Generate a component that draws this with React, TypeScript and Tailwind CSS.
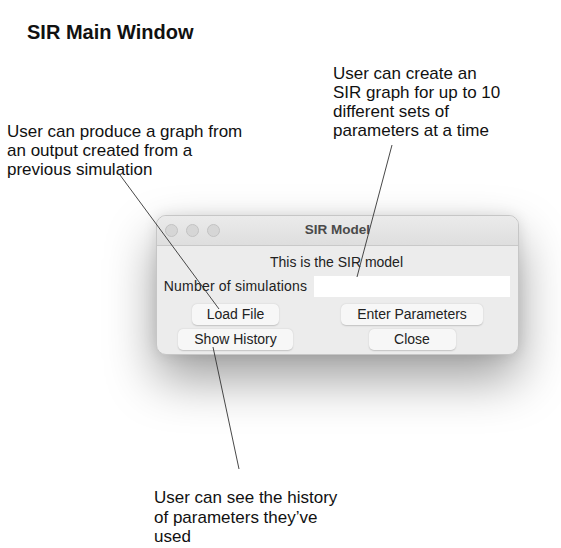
import React from "react";

function Btn({ w, children }: { w: string; children: React.ReactNode }) {
  return (
    <div
      className={`${w} h-[21px] rounded-[5px] bg-[#f7f7f7] shadow-[0_0.5px_1.5px_rgba(0,0,0,0.18)] text-center text-[14px] leading-[21px] text-[#222]`}
    >
      {children}
    </div>
  );
}

export default function App() {
  return (
    <div className="relative w-[561px] h-[548px] overflow-hidden bg-white text-[#111] font-['Liberation_Sans',Arial,sans-serif]">
      <h1 className="pt-[22px] pl-[27px] text-[20px] leading-[20px] font-bold">SIR Main Window</h1>

      <div className="flex items-start">
        <p className="mt-[80px] ml-[7px] w-[260px] text-[17px] leading-[19px]">
          User can produce a graph from
          <br />
          an output created from a
          <br />
          previous simulation
        </p>
        <p className="mt-[22px] ml-[66px] text-[17px] leading-[19px]">
          User can create an
          <br />
          SIR graph for up to 10
          <br />
          different sets of
          <br />
          parameters at a time
        </p>
      </div>

      <div className="mt-[36px] ml-[156px] w-[363px] h-[140px] flex flex-col overflow-hidden rounded-[10px] border border-[#c6c6c6] bg-[#ececec] shadow-[0_24px_50px_rgba(0,0,0,0.38),0_0_14px_rgba(0,0,0,0.1)]">
        <div className="relative h-[30px] shrink-0 flex items-center border-b border-[#c9c9c9] bg-gradient-to-b from-[#ebebeb] to-[#dedede]">
          <div className="flex gap-[8px] pl-[8px]">
            <span className="w-[13px] h-[13px] rounded-full bg-[#d6d6d6] border border-[#c2c2c2]" />
            <span className="w-[13px] h-[13px] rounded-full bg-[#d6d6d6] border border-[#c2c2c2]" />
            <span className="w-[13px] h-[13px] rounded-full bg-[#d6d6d6] border border-[#c2c2c2]" />
          </div>
          <span className="absolute inset-x-0 text-center text-[13.5px] font-bold text-[#4a4a4a]">SIR Model</span>
        </div>

        <div className="pt-[7px] pl-[6px] pr-[8px] text-[#222]">
          <div className="text-center text-[14px] leading-[18px]">This is the SIR model</div>
          <div className="mt-[5px] grid grid-cols-[145px_196px] gap-x-[6px]">
            <div className="h-[21px] flex items-center justify-center text-[14px] tracking-[0.2px] whitespace-nowrap">Number of simulations</div>
            <div className="h-[21px] bg-white" />
            <div className="mt-[7px] flex justify-center">
              <Btn w="w-[87px]">Load File</Btn>
            </div>
            <div className="mt-[7px] flex justify-center">
              <Btn w="w-[142px]">Enter Parameters</Btn>
            </div>
            <div className="mt-[4px] flex justify-center">
              <Btn w="w-[115px]">Show History</Btn>
            </div>
            <div className="mt-[4px] flex justify-center">
              <Btn w="w-[87px]">Close</Btn>
            </div>
          </div>
        </div>
      </div>

      <p className="mt-[133px] ml-[154px] text-[17px] leading-[19.5px]">
        User can see the history
        <br />
        of parameters they’ve
        <br />
        used
      </p>

      <svg className="absolute inset-0 pointer-events-none" width="561" height="548">
        <line x1="120" y1="175" x2="219" y2="309" stroke="#333" strokeWidth="0.9" />
        <line x1="392" y1="145" x2="357" y2="277" stroke="#333" strokeWidth="0.9" />
        <line x1="213" y1="347" x2="239" y2="469" stroke="#333" strokeWidth="0.9" />
      </svg>
    </div>
  );
}
